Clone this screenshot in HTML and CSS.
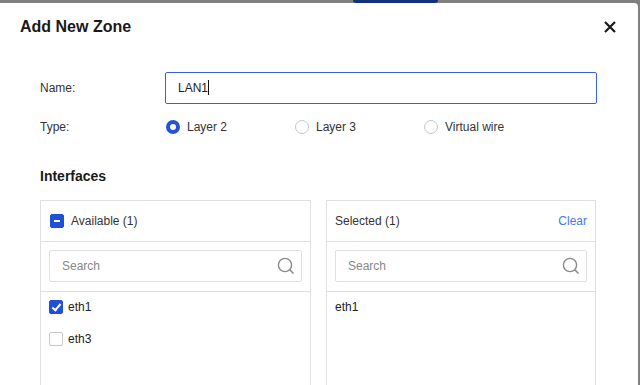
FILE: index.html
```html
<!DOCTYPE html>
<html lang="en">
    <head>
        <title>Add New Zone</title>
        <meta charset="utf-8" />
        <meta name="viewport" content="width=device-width, initial-scale=1.0" />
        <link rel="stylesheet" href="styles.css">
    </head>
    <body>
        <div id="backdrop">
            <div class="tab"></div>
        </div>
        <div id="dialog">
            <div class="dialog-head">
                <span class="title">Add New Zone</span>
                <svg class="close" width="12" height="12" viewBox="0 0 12 12">
                    <path d="M1 1 L11 11 M11 1 L1 11" stroke="#1a1a1a" stroke-width="2.2" fill="none" />
                </svg>
            </div>
            <div class="form">
                <div class="row">
                    <span class="label">Name:</span>
                    <div class="input focus">LAN1<span class="caret"></span></div>
                </div>
                <div class="row type">
                    <span class="label">Type:</span>
                    <div class="radios">
                        <span class="radio-item"><span class="radio on"></span>Layer 2</span>
                        <span class="radio-item"><span class="radio"></span>Layer 3</span>
                        <span class="radio-item"><span class="radio"></span>Virtual wire</span>
                    </div>
                </div>
                <div class="section">Interfaces</div>
                <div class="panels">
                    <div class="panel left">
                        <div class="panel-head">
                            <span class="check minus"></span>
                            <span>Available (1)</span>
                        </div>
                        <div class="panel-search">
                            <div class="search">
                                <span>Search</span>
                                <svg width="18" height="18" viewBox="0 0 18 18">
                                    <circle cx="8" cy="8" r="6.6" stroke="#8a8a8a" stroke-width="1.4" fill="none" />
                                    <path d="M12.8 12.8 L16.5 16.5" stroke="#8a8a8a" stroke-width="1.6" />
                                </svg>
                            </div>
                        </div>
                        <ul class="list">
                            <li><span class="check on"></span>eth1</li>
                            <li><span class="check"></span>eth3</li>
                        </ul>
                    </div>
                    <div class="panel right">
                        <div class="panel-head">
                            <span>Selected (1)</span>
                            <a class="clear" href="#">Clear</a>
                        </div>
                        <div class="panel-search">
                            <div class="search">
                                <span>Search</span>
                                <svg width="18" height="18" viewBox="0 0 18 18">
                                    <circle cx="8" cy="8" r="6.6" stroke="#8a8a8a" stroke-width="1.4" fill="none" />
                                    <path d="M12.8 12.8 L16.5 16.5" stroke="#8a8a8a" stroke-width="1.6" />
                                </svg>
                            </div>
                        </div>
                        <ul class="list">
                            <li>eth1</li>
                        </ul>
                    </div>
                </div>
            </div>
        </div>
    </body>
</html>
```

FILE: styles.css
```css
html, body {
    margin: 0px;
    padding: 0px;
    height: 385px;
    overflow: hidden;
    background: #808080;
    font-family: "Liberation Sans", Arial, sans-serif;
    font-size: 12px;
    color: #333;
}
#backdrop {
    height: 3px;
    display: flex;
}
.tab {
    margin-left: 353px;
    width: 85px;
    height: 3px;
    background: #13317a;
    border-radius: 0 0 6px 6px;
}
#dialog {
    width: 638px;
    height: 382px;
    overflow: hidden;
    background: white;
    border-top-right-radius: 4px;
}
.dialog-head {
    display: flex;
    justify-content: space-between;
    align-items: center;
    padding: 14px 22px 0 20px;
    height: 20px;
}
.title {
    font-size: 16px;
    font-weight: bold;
    color: #1a1a1a;
}
.form {
    padding: 35px 41px 0 40px;
}
.row {
    display: flex;
    align-items: center;
}
.label {
    width: 125px;
    flex: none;
}
.input {
    flex: 1;
    height: 30px;
    line-height: 30px;
    padding: 0 12px;
    border: 1px solid #ccc;
    border-radius: 2px;
    color: #222;
}
.input.focus {
    border-color: #3a62d6;
}
.caret {
    display: inline-block;
    width: 1px;
    height: 15px;
    background: #111;
    vertical-align: -3px;
}
.row.type {
    margin-top: 13px;
    height: 20px;
}
.radios {
    display: flex;
}
.radio-item {
    display: flex;
    align-items: center;
    width: 129px;
    color: #333;
}
.radio {
    box-sizing: border-box;
    width: 14px;
    height: 14px;
    margin: 0 7px 0 1px;
    border: 1px solid #c8c8c8;
    border-radius: 50%;
}
.radio.on {
    border: 4px solid #2453d8;
}
.section {
    margin-top: 29px;
    font-size: 14px;
    font-weight: bold;
    color: #1a1a1a;
    line-height: 20px;
}
.panels {
    display: flex;
    gap: 15px;
    margin-top: 14px;
}
.panel {
    border: 1px solid #e0e0e0;
    height: 300px;
}
.panel.left {
    width: 269px;
}
.panel.right {
    width: 268px;
}
.panel-head {
    display: flex;
    align-items: center;
    height: 40px;
    padding: 0 8px 0 9px;
    border-bottom: 1px solid #e0e0e0;
}
.panel.right .panel-head {
    justify-content: space-between;
    padding-left: 8px;
}
.clear {
    color: #4a76f0;
    text-decoration: none;
}
.panel-search {
    padding: 8px 8px 9px;
    border-bottom: 1px solid #e0e0e0;
}
.search {
    display: flex;
    justify-content: space-between;
    align-items: center;
    height: 30px;
    padding: 0 6px 0 12px;
    border: 1px solid #e0e0e0;
    border-radius: 2px;
    color: #888;
}
.check {
    box-sizing: border-box;
    display: inline-block;
    width: 14px;
    height: 14px;
    border: 1px solid #c8c8c8;
    border-radius: 2px;
    margin-right: 5px;
    position: relative;
}
.check.on, .check.minus {
    background: #2150d8;
    border-color: #2150d8;
}
.panel-head .check {
    margin-right: 7px;
}
.check.minus::after {
    content: "";
    position: absolute;
    left: 3px;
    top: 5px;
    width: 6px;
    height: 2px;
    background: white;
}
.check.on::after {
    content: "";
    position: absolute;
    left: 4px;
    top: 1px;
    width: 3px;
    height: 7px;
    border: solid white;
    border-width: 0 2px 2px 0;
    transform: rotate(40deg);
}
.list {
    list-style: none;
    margin: -1px 0 0;
    padding: 0 8px;
}
.list li {
    display: flex;
    align-items: center;
    height: 32px;
    color: #222;
}
```
